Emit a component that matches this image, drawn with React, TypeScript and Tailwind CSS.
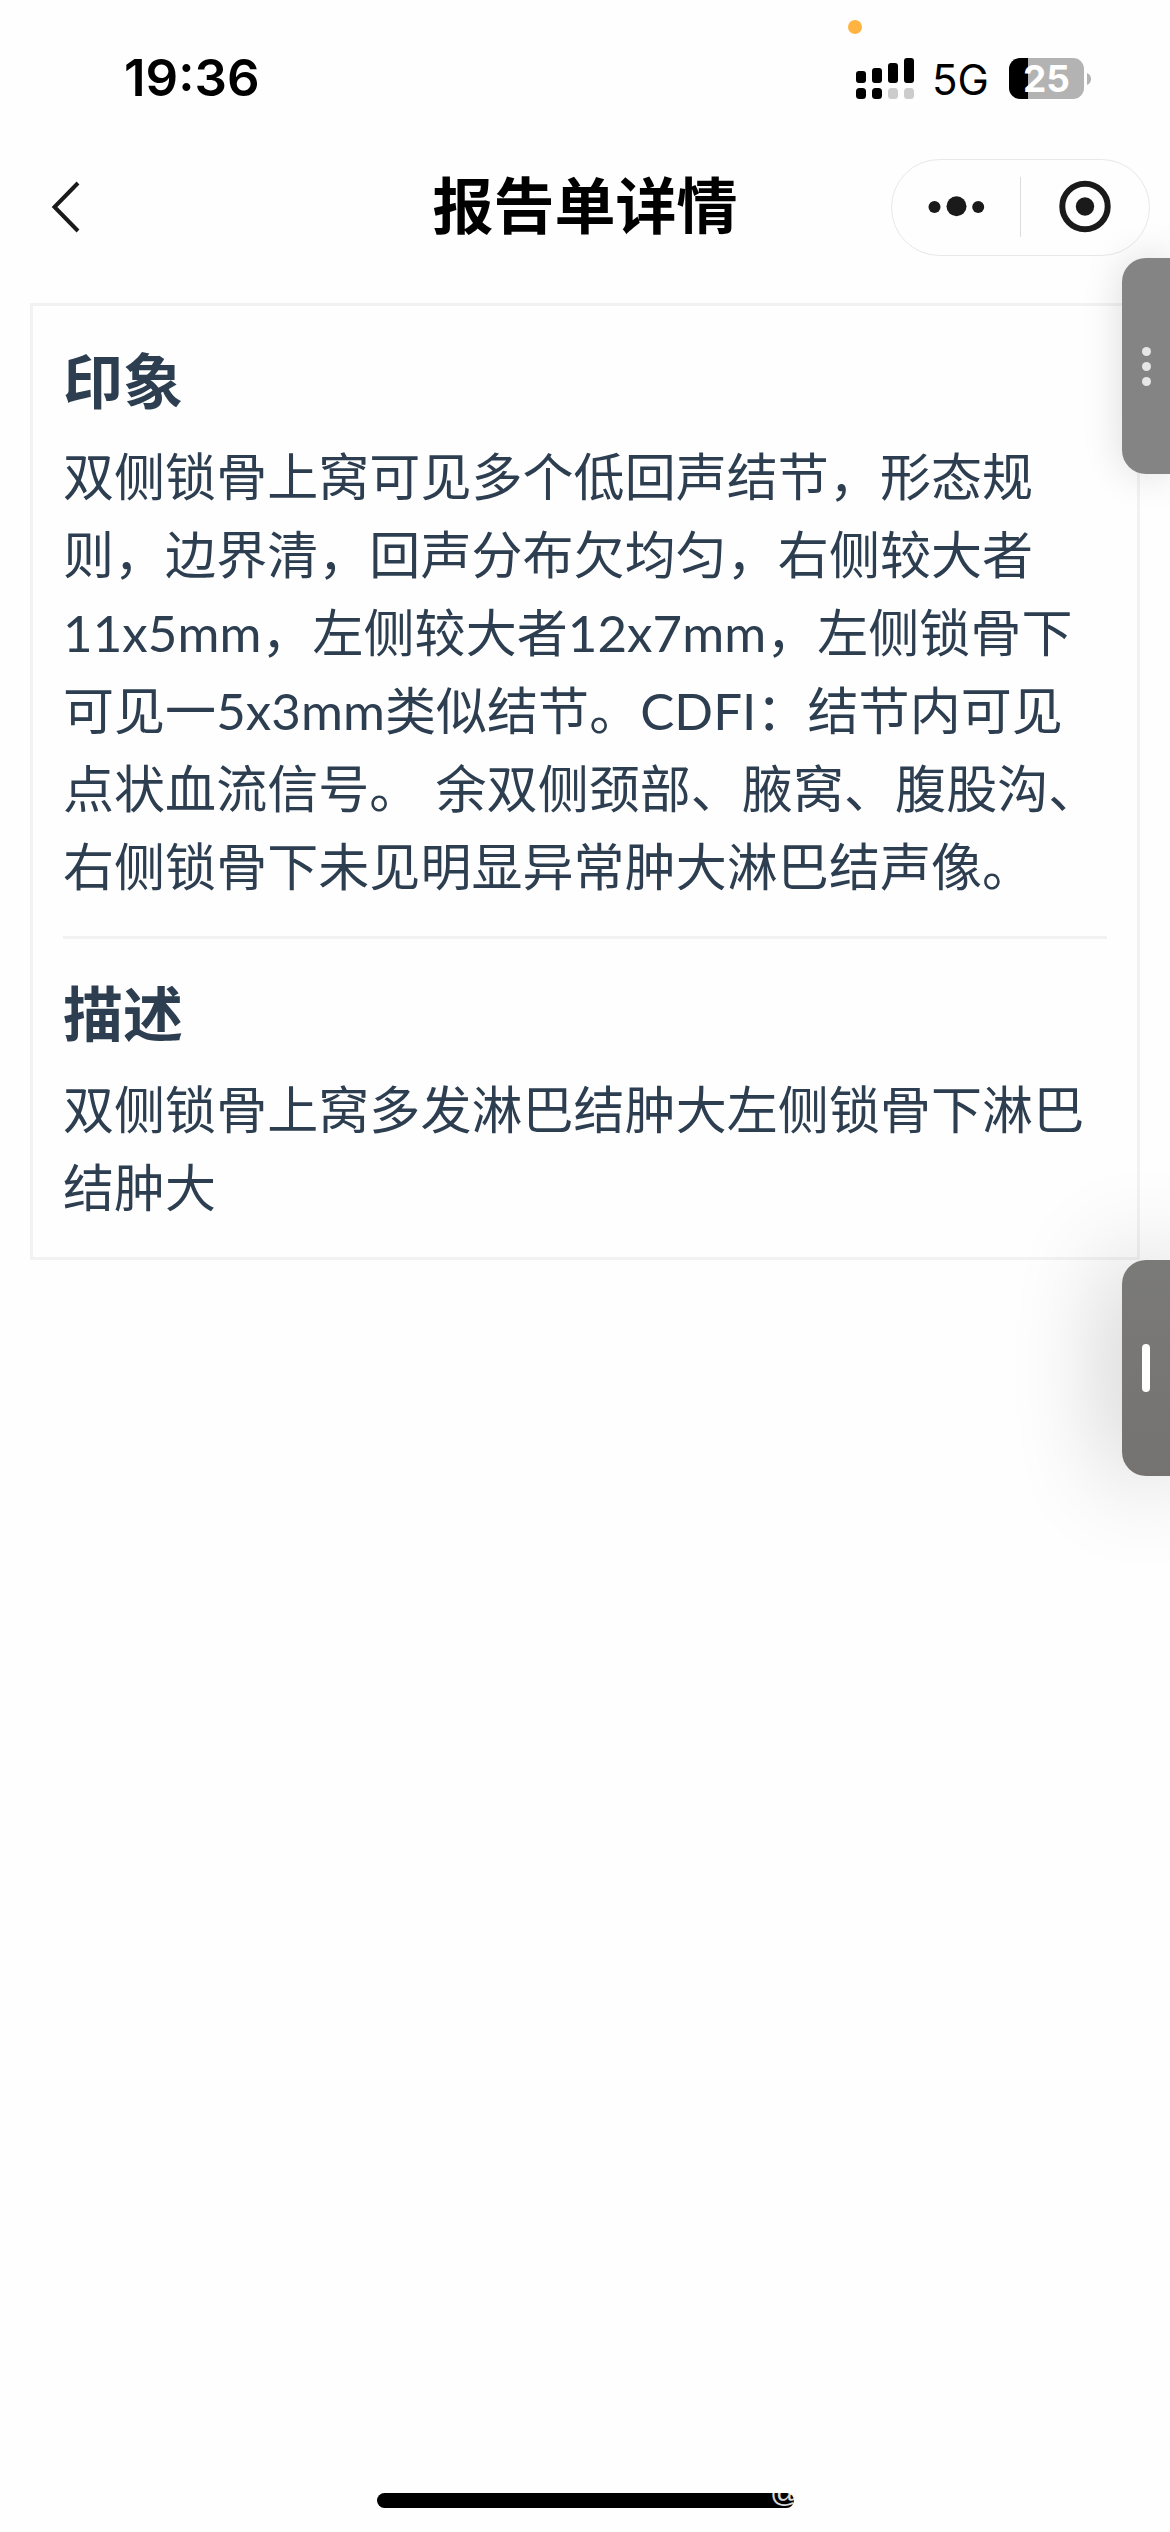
const findings = [
  '双侧锁骨上窝可见多个低回声结节，形态规',
  '则，边界清，回声分布欠均匀，右侧较大者',
  '11x5mm，左侧较大者12x7mm，左侧锁骨下',
  '可见一5x3mm类似结节。CDFI：结节内可见',
  '点状血流信号。 余双侧颈部、腋窝、腹股沟、',
  '右侧锁骨下未见明显异常肿大淋巴结声像。',
];

const description = ['双侧锁骨上窝多发淋巴结肿大左侧锁骨下淋巴', '结肿大'];

const StatusBar = () => (
  <div className="relative flex h-[156px] items-start justify-between pl-[124px] pr-[79px] font-['Inter',sans-serif]">
    <span className="absolute left-[848px] top-[20px] h-[14px] w-[14px] rounded-full bg-[#ffb340]" />
    <span className="mt-[48px] text-[51px] font-semibold leading-[60px]">19:36</span>
    <div className="mt-[57px] flex items-center">
      <svg width="58" height="41" viewBox="0 0 58 41">
        <rect x="0" y="13" width="10" height="12" rx="3" />
        <rect x="16" y="10" width="10" height="15" rx="3" />
        <rect x="32" y="5" width="10" height="20" rx="3" />
        <rect x="48" y="0" width="10" height="25" rx="3" />
        <rect x="0" y="30" width="10" height="11" rx="3.5" />
        <rect x="16" y="30" width="10" height="11" rx="3.5" />
        <rect x="32" y="30" width="10" height="11" rx="3.5" fill="#ccc" />
        <rect x="48" y="30" width="10" height="11" rx="3.5" fill="#ccc" />
      </svg>
      <span className="ml-[18px] mt-[2px] w-[77px] text-[42px] leading-[41px]">5G</span>
      <div className="flex h-[41px] w-[75px] items-center justify-center rounded-[11px] bg-[linear-gradient(90deg,#000_19px,#b3b3b3_19px)] text-[37px] font-bold leading-[41px] text-white">
        25
      </div>
      <svg className="ml-[3px]" width="4" height="12" viewBox="0 0 4 12">
        <path d="M0 0C2.5 1 4 3.3 4 6S2.5 11 0 12Z" fill="#b3b3b3" />
      </svg>
    </div>
  </div>
);

const NavBar = () => (
  <header className="flex h-[102px] items-center justify-between pl-[51px] pr-[20px]">
    <svg className="w-[228px]" width="228" height="54" viewBox="0 0 228 54" fill="none">
      <path d="M27 3L3.5 27L27 51" stroke="#1a1a1a" strokeWidth="4" />
    </svg>
    <h1 className="text-[61px] font-bold leading-[90px]">报告单详情</h1>
    <div className="flex h-[97px] w-[259px] items-center rounded-full border border-[#e8e8e8]">
      <svg width="257" height="95" viewBox="0 0 257 95" fill="#1a1a1a">
        <circle cx="42.5" cy="47" r="6" />
        <circle cx="64.5" cy="46.2" r="10" />
        <circle cx="86.2" cy="47" r="6" />
        <rect x="128" y="17" width="1" height="60" fill="#dcdcdc" />
        <circle cx="193" cy="46.5" r="22.7" fill="none" stroke="#1a1a1a" strokeWidth="6" />
        <circle cx="193" cy="46.5" r="9.2" />
      </svg>
    </div>
  </header>
);

const Section = ({ title, lines }: { title: string; lines: string[] }) => (
  <section className="py-[30px]">
    <h2 className="text-[60px] font-bold leading-[90px]">{title}</h2>
    <div className="mt-[12px] text-[51px] leading-[78px] tracking-[0.06px] [word-spacing:2px]">
      {lines.map((line) => (
        <p key={line} className="whitespace-pre">
          {line}
        </p>
      ))}
    </div>
  </section>
);

const App = () => {
  return (
    <div className="relative flex h-[2532px] w-[1170px] flex-col overflow-hidden bg-[#fefefe] font-['Inter','Noto_Sans_CJK_SC',sans-serif] text-black">
      <StatusBar />
      <NavBar />

      <main className="mx-[30px] mt-[45px] divide-y-[3px] divide-[#f2f2f2] border-[3px] border-[#f2f2f2] px-[30px] font-['Lato','Noto_Sans_CJK_SC',sans-serif] text-[#2c3e50]">
        <Section title="印象" lines={findings} />
        <Section title="描述" lines={description} />
      </main>

      {/* floating handles on the right edge */}
      <div className="absolute right-0 top-[258px] flex h-[216px] w-[48px] flex-col items-center justify-center gap-[6px] rounded-l-[24px] bg-[#848484] shadow-[0_0_40px_rgba(0,0,0,0.14)]">
        <span className="h-[9px] w-[9px] rounded-full bg-[#e6e6e6]" />
        <span className="h-[9px] w-[9px] rounded-full bg-[#e6e6e6]" />
        <span className="h-[9px] w-[9px] rounded-full bg-[#e6e6e6]" />
      </div>
      <div className="absolute right-0 top-[1260px] flex h-[216px] w-[48px] items-center justify-center rounded-l-[24px] bg-gradient-to-b from-[#7a7a79] to-[#757371] shadow-[0_0_100px_rgba(0,0,0,0.3)]">
        <span className="h-[48px] w-[8px] rounded-full bg-white" />
      </div>

      <div className="relative ml-[377px] mt-auto mb-[24px] h-[15px] w-[417px] rounded-full bg-black">
        <span className="absolute left-[393px] top-[-18px] font-['Liberation_Sans',sans-serif] text-[30px] leading-[34px] text-white/85">
          @
        </span>
      </div>
    </div>
  );
};

export default App;
